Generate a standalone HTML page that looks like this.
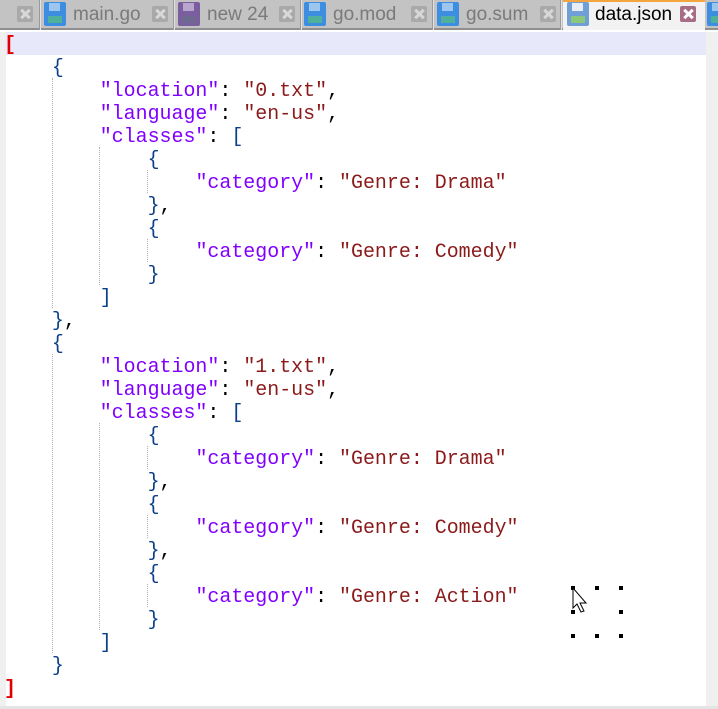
<!DOCTYPE html>
<html><head><meta charset="utf-8"><style>
*{margin:0;padding:0;box-sizing:border-box}
body{width:718px;height:709px;background:#fff;position:relative;overflow:hidden;font-family:"Liberation Sans",sans-serif}
#tabs{position:absolute;left:0;top:0;width:718px;height:30px;background:#c3c3c3;border-bottom:2px solid #8f8f8f}
.x{position:absolute;top:6px;width:16px;height:16px;background:#a9a9a9;border-radius:2px}
.x:before,.x:after{content:"";position:absolute;left:7px;top:2px;width:3px;height:12px;background:#d8d8d8;transform:rotate(45deg)}
.x:after{transform:rotate(-45deg)}
.ax{background:#a86d85}.ax:before,.ax:after{background:#fff}
.sep{position:absolute;top:0;width:2px;height:30px;background:#e2e2e2;border-left:1px solid #9a9a9a}
.ic{position:absolute;top:2px;width:22px;height:24px;background:#3d8ee0;border-radius:2px}
.ic:before{content:"";position:absolute;left:5px;top:1px;width:11px;height:8px;background:#9cc5ef}
.ic:after{content:"";position:absolute;left:4px;top:14px;width:14px;height:7px;background:#4fb09b}
.pur{background:#7b5e9e}.pur:before{background:#b8a6cf}.pur:after{background:#6f6890}
.act{background:#6f9fd6}.act:before{background:#e8eef8}.act:after{background:#8cc87a}
.t{position:absolute;top:3px;font-size:19px;color:#7a7a7a;line-height:24px}
#active{position:absolute;left:563px;top:0;width:142px;height:30px;background:#f2f2f2;border-top:2px solid #f4a540}
#cur{position:absolute;left:6px;top:32px;width:700px;height:23px;background:#e8e8fb}
#lm{position:absolute;left:0;top:32px;width:6px;height:677px;background:#f0f0f0}
#rs{position:absolute;left:706px;top:32px;width:12px;height:677px;background:#f0f0f0}
#bot{position:absolute;left:0;top:706px;width:718px;height:3px;background:#e4e4e4}
pre{position:absolute;left:4px;top:33px;font-family:"Liberation Mono",monospace;font-size:19.95px;line-height:23px;color:#000}
.k{color:#8000ff}.s{color:#8b1a1a}.b{color:#0b3f8a}.r{color:#e00000;font-weight:bold}
.g{position:absolute;width:0;border-left:1px dotted #b0b0b0}
.d{position:absolute;width:4px;height:4px;background:#000}
</style></head><body>
<div id="tabs">
<div class="x" style="left:17px"></div><div class="sep" style="left:39px"></div>
<div class="ic" style="left:44px"></div><div class="t" style="left:73px">main.go</div>
<div class="x" style="left:152px"></div><div class="sep" style="left:173px"></div>
<div class="ic pur" style="left:178px"></div><div class="t" style="left:207px">new 24</div>
<div class="x" style="left:279px"></div><div class="sep" style="left:300px"></div>
<div class="ic" style="left:304px"></div><div class="t" style="left:333px">go.mod</div>
<div class="x" style="left:411px"></div><div class="sep" style="left:432px"></div>
<div class="ic" style="left:437px"></div><div class="t" style="left:466px">go.sum</div>
<div class="x" style="left:540px"></div><div class="sep" style="left:560px"></div>
<div id="active"></div>
<div class="ic act" style="left:567px"></div><div class="t" style="left:595px;color:#000">data.json</div>
<div class="x ax" style="left:680px"></div>
<div class="ic" style="left:707px"></div>
</div>
<div id="lm"></div><div id="cur"></div><div id="rs"></div><div id="bot"></div>
<div class="g" style="left:52px;top:78px;height:230px"></div>
<div class="g" style="left:99px;top:147px;height:138px"></div>
<div class="g" style="left:147px;top:170px;height:23px"></div>
<div class="g" style="left:147px;top:239px;height:23px"></div>
<div class="g" style="left:52px;top:354px;height:299px"></div>
<div class="g" style="left:99px;top:423px;height:207px"></div>
<div class="g" style="left:147px;top:446px;height:23px"></div>
<div class="g" style="left:147px;top:515px;height:23px"></div>
<div class="g" style="left:147px;top:584px;height:23px"></div>
<pre><span class="r">[</span>
    <span class="b">{</span>
        <span class="k">"location"</span>: <span class="s">"0.txt"</span>,
        <span class="k">"language"</span>: <span class="s">"en-us"</span>,
        <span class="k">"classes"</span>: <span class="b">[</span>
            <span class="b">{</span>
                <span class="k">"category"</span>: <span class="s">"Genre: Drama"</span>
            <span class="b">}</span>,
            <span class="b">{</span>
                <span class="k">"category"</span>: <span class="s">"Genre: Comedy"</span>
            <span class="b">}</span>
        <span class="b">]</span>
    <span class="b">}</span>,
    <span class="b">{</span>
        <span class="k">"location"</span>: <span class="s">"1.txt"</span>,
        <span class="k">"language"</span>: <span class="s">"en-us"</span>,
        <span class="k">"classes"</span>: <span class="b">[</span>
            <span class="b">{</span>
                <span class="k">"category"</span>: <span class="s">"Genre: Drama"</span>
            <span class="b">}</span>,
            <span class="b">{</span>
                <span class="k">"category"</span>: <span class="s">"Genre: Comedy"</span>
            <span class="b">}</span>,
            <span class="b">{</span>
                <span class="k">"category"</span>: <span class="s">"Genre: Action"</span>
            <span class="b">}</span>
        <span class="b">]</span>
    <span class="b">}</span>
<span class="r">]</span></pre>
<div class="d" style="left:571px;top:586px"></div><div class="d" style="left:595px;top:586px"></div><div class="d" style="left:619px;top:586px"></div>
<div class="d" style="left:571px;top:610px"></div><div class="d" style="left:619px;top:610px"></div>
<div class="d" style="left:571px;top:634px"></div><div class="d" style="left:595px;top:634px"></div><div class="d" style="left:619px;top:634px"></div>
<svg style="position:absolute;left:572px;top:587px" width="22" height="28"><path d="M1 1 L1 21 L5 17 L9 25 L12 24 L8 16 L14 16 Z" fill="#fff" stroke="#000" stroke-width="1"/></svg>
</body></html>
